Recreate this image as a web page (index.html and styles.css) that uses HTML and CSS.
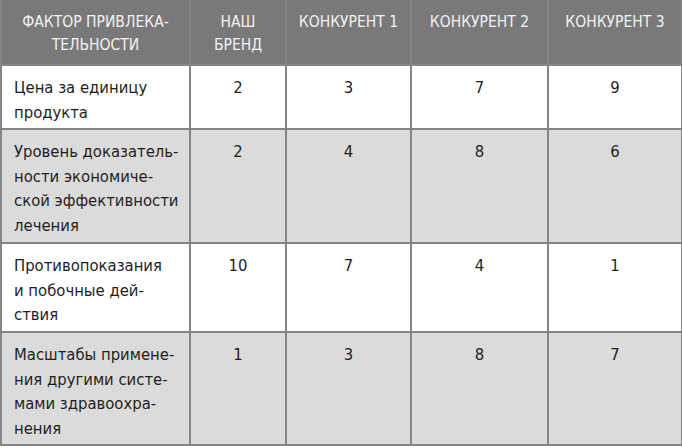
FILE: index.html
```html
<!DOCTYPE html>
<html lang="ru">
<head>
<meta charset="utf-8">
<link rel="stylesheet" href="styles.css">
</head>
<body>
<table class="grid">
  <colgroup>
    <col class="c-factor">
    <col class="c-brand">
    <col class="c-k1">
    <col class="c-k2">
    <col class="c-k3">
  </colgroup>
  <thead>
    <tr class="head">
      <th class="factor">ФАКТОР ПРИВЛЕКА-<br>ТЕЛЬНОСТИ</th>
      <th>НАШ<br>БРЕНД</th>
      <th>КОНКУРЕНТ 1</th>
      <th>КОНКУРЕНТ 2</th>
      <th>КОНКУРЕНТ 3</th>
    </tr>
  </thead>
  <tbody>
    <tr class="r1">
      <td class="name">Цена за единицу<br>продукта</td>
      <td>2</td><td>3</td><td>7</td><td>9</td>
    </tr>
    <tr class="r2 shade">
      <td class="name">Уровень доказатель-<br>ности экономиче-<br>ской эффективности<br>лечения</td>
      <td>2</td><td>4</td><td>8</td><td>6</td>
    </tr>
    <tr class="r3">
      <td class="name">Противопоказания<br>и побочные дей-<br>ствия</td>
      <td>10</td><td>7</td><td>4</td><td>1</td>
    </tr>
    <tr class="r4 shade">
      <td class="name">Масштабы примене-<br>ния другими систе-<br>мами здравоохра-<br>нения</td>
      <td>1</td><td>3</td><td>8</td><td>7</td>
    </tr>
  </tbody>
</table>
</body>
</html>
```
FILE: styles.css
```css
html, body {
  margin: 0;
  padding: 0;
  background: #ffffff;
}
body {
  width: 682px;
  height: 448px;
  overflow: hidden;
  font-family: "DejaVu Sans Condensed", "Liberation Sans Narrow", "DejaVu Sans", sans-serif;
  font-stretch: condensed;
  color: #1e1e1e;
}
.grid {
  border-collapse: collapse;
  table-layout: fixed;
  width: 681px;
}
.c-factor { width: 189px; }
.c-brand { width: 96px; }
.c-k1 { width: 125px; }
.c-k2 { width: 137px; }
.c-k3 { width: 134px; }

.grid th, .grid td {
  border: 2px solid #858585;
  vertical-align: top;
  text-align: center;
  padding: 0;
}
.head { height: 65px; }
.r1 { height: 64px; }
.r2 { height: 114px; }
.r3 { height: 89px; }
.r4 { height: 113px; }

.head th {
  background: #7a797a;
  color: #f2f2f2;
  font-weight: normal;
  font-size: 15.5px;
  line-height: 23px;
  padding-top: 11px;
  border-top: 0;
}
.grid td {
  font-size: 16.5px;
  line-height: 24.5px;
  padding-top: 10px;
}
.grid td.name {
  text-align: left;
  padding-left: 12px;
}
.shade td { background: #dcdbdc; }
```
